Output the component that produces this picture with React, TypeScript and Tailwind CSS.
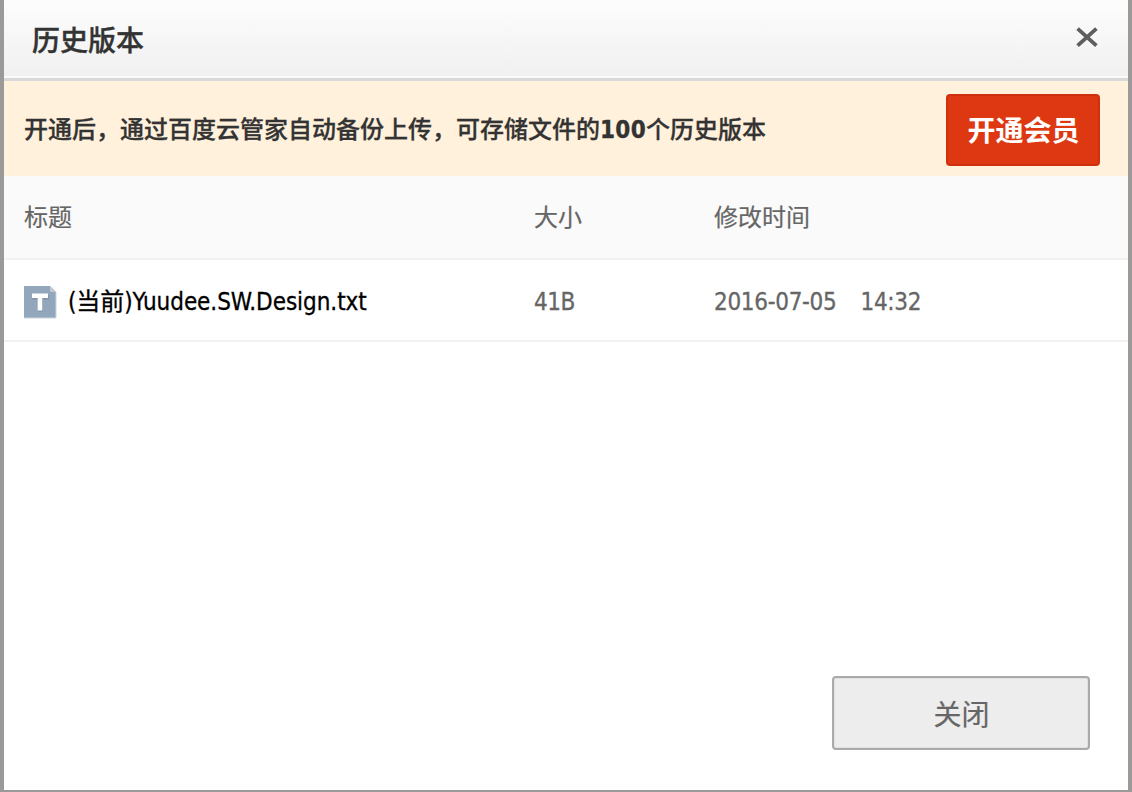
import React from "react";

const cjk = "font-['Noto_Sans_CJK_SC',sans-serif]";
const mixed =
  "font-['DejaVu_Sans_Condensed','DejaVu_Sans','Noto_Sans_CJK_SC',sans-serif] [font-stretch:condensed]";

function CloseIcon() {
  return (
    <svg width="24" height="20" viewBox="0 0 24 20" fill="none" stroke="#5c5e60" aria-hidden="true">
      <path d="M2.6 1.6 21.4 18.6M21.4 1.6 2.6 18.6" strokeWidth="3.8" />
    </svg>
  );
}

function TextFileIcon() {
  return (
    <svg width="33" height="33" viewBox="0 0 33 33" aria-hidden="true">
      <path d="M0 0H26L32 6V32H0Z" fill="#92a7bb" />
      <path d="M26 0 32 6H27.5Q26 6 26 4.5Z" fill="#c3c8cc" />
      <path d="M0 32H32V6" fill="none" stroke="#cbd5df" strokeWidth="1" />
      <path d="M8 9H25V13.5H19V25.5H14V13.5H8Z" fill="#8296aa" />
      <path d="M8 7.5H24V12H18.3V24.5H13.7V12H8Z" fill="#fff" />
    </svg>
  );
}

export default function App() {
  return (
    <div
      className={`flex h-[792px] w-[1132px] flex-col overflow-hidden border-x-4 border-b-2 border-[#9b9a98] bg-white ${cjk}`}
    >
      <header className="flex h-[81px] shrink-0 items-start justify-between border-b-[3px] border-[#d9d9d9] bg-linear-to-b from-[#fdfdfd] to-[#f0f0f0] pr-[29px] pl-7 shadow-[inset_0_-2px_0_#fafafa]">
        <h1 className="mt-[19px] text-[28px] leading-10 font-medium text-[#333] [-webkit-text-stroke:0.4px_#333]">
          历史版本
        </h1>
        <button className="mt-[27px]" aria-label="关闭">
          <CloseIcon />
        </button>
      </header>

      <section className="flex h-[95px] shrink-0 items-center justify-between bg-[#fff1dc] pt-px pr-7 pl-5">
        <p className="text-2xl font-medium whitespace-nowrap text-[#333] [-webkit-text-stroke:0.3px_#333]">
          开通后，通过百度云管家自动备份上传，可存储文件的
          <span className={`${mixed} font-bold tracking-[0.3px]`}>100</span>
          个历史版本
        </p>
        <button className="mt-[2px] h-[72px] w-[154px] rounded border-2 border-[#cf310d] bg-[#dd3812] pb-[2px] pl-px text-[28px] leading-none font-bold text-white">
          开通会员
        </button>
      </section>

      <div className="grid h-[84px] shrink-0 grid-cols-[510px_180px_1fr] items-center border-b-2 border-[#f1f1f1] bg-[#fafafa] pb-[2px] pl-5 text-2xl text-[#666] [-webkit-text-stroke:0.2px_#666]">
        <span>标题</span>
        <span>大小</span>
        <span>修改时间</span>
      </div>

      <div className="grid h-[82px] shrink-0 grid-cols-[510px_180px_1fr] items-center border-b-2 border-[#f1f1f1] pt-1 pl-5 text-2xl text-[#666] [-webkit-text-stroke:0.3px]">
        <div className="flex items-center">
          <TextFileIcon />
          <span className={`ml-[11px] whitespace-nowrap text-black ${mixed} tracking-[-0.06px]`}>
            (当前)Yuudee.SW.Design.txt
          </span>
        </div>
        <span className={`${mixed} tracking-[-0.5px]`}>41B</span>
        <div className={`flex gap-6 ${mixed} tracking-[-0.3px]`}>
          <span>2016-07-05</span>
          <span>14:32</span>
        </div>
      </div>

      <footer className="mt-auto flex shrink-0 justify-end pr-[38px] pb-10">
        <button className="h-[74px] w-[258px] rounded border-2 border-[#aaa] bg-[#ededed] pl-px text-[28px] leading-none text-[#666] shadow-[inset_0_0_0_1px_#e1e1e1] [-webkit-text-stroke:0.2px_#666]">
          关闭
        </button>
      </footer>
    </div>
  );
}
